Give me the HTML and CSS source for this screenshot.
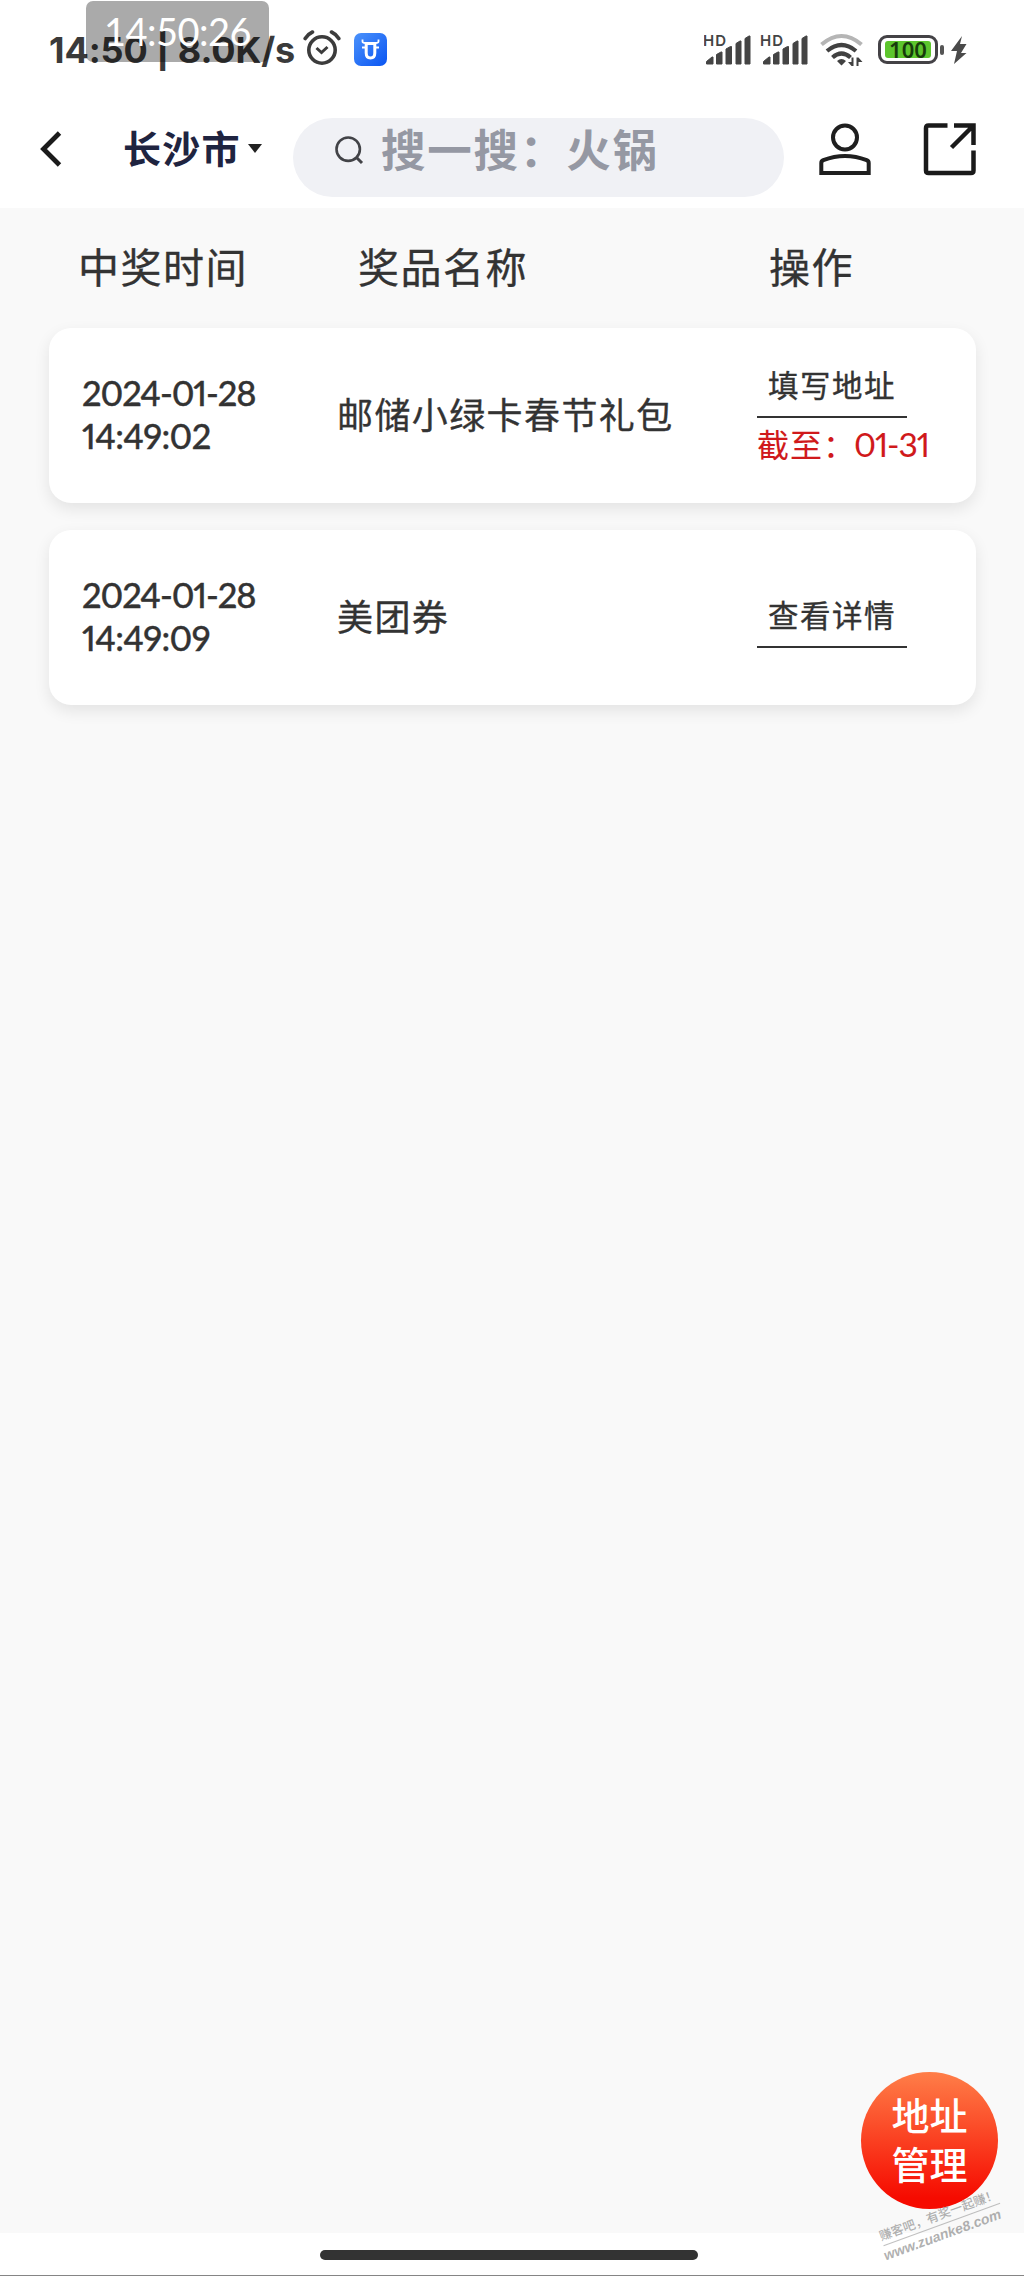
FILE: index.html
```html
<!DOCTYPE html>
<html lang="zh-CN">
<head>
<meta charset="utf-8">
<title>中奖记录</title>
<link rel="stylesheet" href="styles.css">
</head>
<body>
<div class="screen">
  <div class="status">
    <span class="status-text">14:50 | 8.0K/s</span>
    <svg class="alarm" width="38" height="36" viewBox="0 0 38 36" fill="none" stroke="#3c3c3c">
      <circle cx="19" cy="20" r="13.2" stroke-width="3.6"/>
      <path d="M2.200 8.500Q5 4 9.500 2M35.800 8.500Q33 4 28.500 2" stroke-width="3.600" stroke-linecap="round"/>
      <path d="M13.500 18l5 4.500 6-5.500" stroke-width="3"/>
    </svg>
    <svg class="app" width="33" height="33" viewBox="0 0 33 33">
      <defs><linearGradient id="blue" x1="0" y1="0" x2="1" y2="1"><stop offset="0" stop-color="#4b92fb"/><stop offset="1" stop-color="#0a55f2"/></linearGradient></defs>
      <rect width="33" height="33" rx="7" fill="url(#blue)"/>
      <path d="M12.200 10.500h8.600v9.500q0 5-4.300 5t-4.300-5z" fill="none" stroke="#fff" stroke-width="3"/>
      <path d="M8.500 6.500v2q0 1.500 3 1.500M24.500 6.500v2q0 1.500-3 1.500M8 14.500h3M22 14.500h3" fill="none" stroke="#fff" stroke-width="1.800"/>
    </svg>
    <div class="status-right">
      <svg width="106" height="34" viewBox="0 0 106 34">
        <defs>
          <g id="signal">
            <text class="hd" x="-1" y="12.500" textLength="23">HD</text>
            <path d="M2.500 31v-2.500L8 24h1v7zM12.500 31V21.500l4.500-2.500h1v12zM22 31V16l4.500-2.500h1V31zM32 31V10.500L36 8h1v23zM41 31V5.500L45 3h1v28z" fill="#444" stroke="#444" stroke-linejoin="round"/>
          </g>
        </defs>
        <use href="#signal"/><use href="#signal" x="57"/>
      </svg>
      <svg class="wifi" width="44" height="34" viewBox="0 0 44 34" fill="none">
        <path d="M1.500 11.500q20-17 40 0" stroke="#b5b5b5" stroke-width="4"/>
        <path d="M7 18q14.500-12 29 0M12.500 24.500q9-8 18 0" stroke="#414141" stroke-width="4.200"/>
        <path d="M17 28q4.500-4 9 0l-4.500 4.500zM31.500 24.500h2V33h-2l-3.500-4h3.500zM36.500 33v-8.500h2l4 4.500h-4v4z" fill="#414141"/>
      </svg>
      <div class="battery"><div class="charge">100</div></div>
      <i class="tip"></i>
      <svg class="bolt" width="18" height="30" viewBox="0 0 18 30"><path d="M12 1L1 16h6l-3 13L16.500 18H11l5.500-9H10z" fill="#4a4a4a"/></svg>
    </div>
    <div class="clock">14:50:26</div>
  </div>

  <div class="nav">
    <svg class="back" width="22" height="36" viewBox="0 0 22 36"><path d="M19.500 2L3.500 18l16 16" fill="none" stroke="#1b1b1b" stroke-width="4.800"/></svg>
    <span class="city">长沙市</span>
    <i class="caret"></i>
    <div class="search">
      <svg width="29" height="29" viewBox="0 0 29 29" fill="none" stroke="#424347"><circle cx="13.200" cy="13.200" r="11.700" stroke-width="2.600"/><path d="M21 21l6 6" stroke-width="3"/></svg>
      <span class="placeholder">搜一搜：火锅</span>
    </div>
    <svg class="user" width="52" height="52" viewBox="0 0 52 52" fill="none" stroke="#1f1f1f" stroke-width="4"><circle cx="26" cy="14.500" r="12"/><path d="M2.300 50V40q0-2 2-2.800 21.700-8.500 43.400 0 2 .8 2 2.800v10z"/></svg>
    <svg class="share" width="54" height="54" viewBox="0 0 54 54" fill="none" stroke="#1a1a1a" stroke-width="4.500"><path d="M24.500 3.500H5.500q-2.500 0-2.500 2.500V48.500q0 2.500 2.500 2.500H48q2.500 0 2.500-2.500V28.500M31 3.500H50.500V23M50 4L28.500 25.500"/></svg>
  </div>

  <main class="content">
    <div class="heads"><span>中奖时间</span><span>奖品名称</span><span>操作</span></div>
    <div class="cards">
      <div class="card">
        <div class="time">2024-01-28<br><span class="hours">14:49:02</span></div>
        <div class="prize">邮储小绿卡春节礼包</div>
        <div class="action"><a class="link">填写地址</a><div class="deadline">截至：<span class="day">01-31</span></div></div>
      </div>
      <div class="card">
        <div class="time">2024-01-28<br><span class="hours">14:49:09</span></div>
        <div class="prize">美团券</div>
        <div class="action"><a class="link">查看详情</a></div>
      </div>
    </div>
  </main>

  <div class="gesture"><div class="pill"></div></div>
  <div class="fab">地址<br>管理</div>
  <div class="mark"><div class="mark-top">赚客吧，有奖一起赚！</div><div class="mark-url">www.zuanke8.com</div></div>
</div>
</body>
</html>
```
FILE: styles.css
```css
* { box-sizing: border-box; }
body { margin: 0; background: #fff; font-family: "Noto Sans CJK SC", sans-serif; color: #333; }
.screen { position: relative; width: 1024px; height: 2276px; display: flex; flex-direction: column; overflow: hidden; border-bottom: 1px solid #858585; }
svg { display: block; flex: none; }

.status { position: relative; height: 100px; padding: 0 0 0 49px; display: flex; align-items: center; flex: none; }
.status-text { width: 254px; font: 650 36px/40px Inter, sans-serif; letter-spacing: -0.1px; color: #3a3a3a; white-space: nowrap; }
.alarm { margin-top: -4px; }
.app { margin-left: 13px; margin-top: -2px; }
.status-right { margin-left: 317px; margin-top: -1px; display: flex; align-items: center; }
.hd { font: 600 15px Inter, sans-serif; fill: #444; }
.wifi { margin-left: 10px; }
.battery { margin-left: 14px; width: 60px; height: 29px; padding: 3px 4px; border: 3px solid #444246; border-radius: 9px; }
.charge { height: 17px; border-radius: 3px; background: #5dc52d; color: #173b0c; font: 600 22px/17px "Noto Sans", sans-serif; text-align: center; }
.tip { width: 4px; height: 10px; margin-left: 2px; border-radius: 2px; background: #555; }
.bolt { margin-left: 6px; }
.clock { position: absolute; left: 86px; top: 1px; width: 183px; height: 61px; border-radius: 7px; background: rgba(0, 0, 0, .335); color: #fff; font: 400 38px/60px Lato, sans-serif; text-align: center; letter-spacing: -0.5px; }

.nav { height: 108px; flex: none; display: flex; align-items: flex-start; }
.back { margin: 31px 0 0 40px; }
.city { width: 120px; margin: 22px 0 0 61px; font-size: 38px; line-height: 50px; font-weight: 700; letter-spacing: 1.3px; color: #1f2440; }
.caret { margin: 44px 0 0 5px; border: 7px solid transparent; border-top: 9px solid #222; border-bottom: 0; }
.search { margin: 18px 0 0 31px; width: 491px; height: 79px; border-radius: 40px; background: #f0f1f5; padding: 18px 0 0 42px; display: flex; align-items: flex-start; }
.placeholder { margin: -21px 0 0 17px; font-size: 44.5px; line-height: 66px; font-weight: 700; letter-spacing: 1.8px; color: #9598a3; white-space: nowrap; }
.user { margin: 23px 0 0 35px; }
.share { margin: 22px 0 0 52px; }

.content { height: 2025px; flex: none; background: #f9f9f9; -webkit-text-stroke: .35px currentColor; }
.heads { height: 120px; padding: 0 0 0 78px; display: grid; grid-template-columns: 280px 411px 1fr; font-size: 41px; line-height: 114px; letter-spacing: 1.5px; }
.cards { padding: 0 48px 0 49px; display: flex; flex-direction: column; gap: 27px; }
.card { height: 175px; border-radius: 22px; background: #fff; box-shadow: 0 6px 16px rgba(0, 0, 0, .09); display: grid; grid-template-columns: 255px 420px 1fr; align-items: center; padding-left: 33px; }
.time { padding-bottom: 3px; font: 500 34.5px/43px Lato, sans-serif; letter-spacing: -1.1px; font-variant-numeric: proportional-nums; }
.hours { letter-spacing: -0.6px; }
.prize { padding-bottom: 5px; font-size: 36px; line-height: 50px; letter-spacing: 1.4px; }
.action { display: flex; flex-direction: column; align-items: flex-start; }
.link { width: 150px; border-bottom: 2px solid #333; padding: 0 0 6px 11px; font-size: 30.5px; line-height: 52px; letter-spacing: 1.5px; white-space: nowrap; }
.deadline { height: 56px; color: #d0191b; font-size: 32px; line-height: 50px; letter-spacing: 1px; white-space: nowrap; -webkit-text-stroke-width: .1px; }
.day { font-family: Lato, sans-serif; font-size: 33.5px; letter-spacing: -1.1px; margin-left: -2px; font-variant-numeric: proportional-nums; }

.gesture { height: 42px; flex: none; padding-top: 17px; }
.pill { width: 378px; height: 10px; margin-left: 320px; border-radius: 5px; background: #333; }
.fab { position: absolute; left: 861px; top: 2072px; width: 137px; height: 137px; padding-top: 17px; border-radius: 50%; background: linear-gradient(#ff7e48, #f60b00 92%); color: #fff; font-size: 38px; line-height: 49px; font-weight: 500; text-align: center; }
.mark { position: absolute; left: 880px; top: 2203px; width: 124px; height: 44px; transform: rotate(-20deg); color: rgba(150, 150, 150, .75); white-space: nowrap; text-align: center; }
.mark-top { display: flex; justify-content: center; font-size: 12.5px; line-height: 21px; font-weight: 500; border-bottom: 1px solid rgba(150, 150, 150, .6); }
.mark-url { margin-left: -6px; font: italic 700 14px/19px "Liberation Sans", sans-serif; }
```
